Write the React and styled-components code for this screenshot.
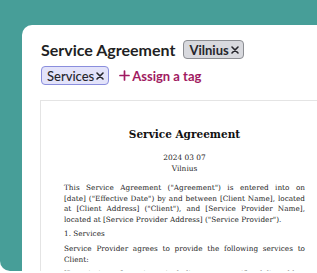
import React from 'react'
import styled, { createGlobalStyle } from 'styled-components'

const GlobalStyle = createGlobalStyle`
    html, body {
        overflow: hidden;
    }
    body {
        margin: 0;
        background: #ffffff;
        font-family: "Lato", "Noto Sans", sans-serif;
    }
`

const Backdrop = styled.div`
    width: 317px;
    height: 271px;
    background: #479e98;
    border-bottom-left-radius: 10px;
    overflow-x: clip;
    overflow-y: visible;
    padding: 25px 0 0 22px;
    box-sizing: border-box;
`
const Card = styled.div`
    width: 320px;
    height: 260px;
    background: #ffffff;
    border-top-left-radius: 10px;
    padding: 15px 0 0 19px;
    box-sizing: border-box;
`
const Header = styled.div`
    display: flex;
    flex-wrap: wrap;
    align-items: center;
    width: 272px;
    column-gap: 8px;
    row-gap: 7px;
`
const Title = styled.h1`
    margin: 0;
    font-size: 16px;
    font-weight: 700;
    color: #1f1f24;
    line-height: 19px;
`
const Tag = styled.span`
    display: inline-flex;
    align-items: center;
    gap: 1px;
    height: 19px;
    padding: 0 3px 0 5px;
    box-sizing: border-box;
    border-radius: 4px;
    border: 1px solid ${p => p.$border};
    background: ${p => p.$bg};
    color: #26262c;
    font-size: 13px;
    font-weight: ${p => p.$bold ? 700 : 500};
`
const AssignButton = styled.span`
    display: inline-flex;
    align-items: center;
    gap: 2px;
    margin-left: 2px;
    color: #a11a61;
    font-size: 13px;
    font-weight: 700;
`
const Paper = styled.div`
    margin-top: 15px;
    margin-left: -1px;
    width: 300px;
    border: 1px solid #e4e4e4;
    border-right: none;
    background: #ffffff;
    padding: 24px 0 0 23px;
    font-family: "DejaVu Serif", "Liberation Serif", serif;
    color: #262626;
`
const DocTitle = styled.h2`
    margin: 0;
    width: 241px;
    text-align: center;
    font-size: 10.5px;
    line-height: 18px;
    font-weight: 700;
    color: #111111;
`
const DocMeta = styled.div`
    width: 241px;
    margin-top: 9px;
    text-align: center;
    font-size: 7.4px;
    line-height: 11px;
`
const DocText = styled.p`
    width: 241px;
    margin: ${p => p.$top || 4}px 0 0;
    font-size: 7.3px;
    line-height: 10.6px;
`
// one printed line of the document, stretched to the column like the source
const DocLine = styled.span`
    display: block;
    white-space: nowrap;
    text-align: justify;
    text-align-last: ${p => p.$last ? 'left' : 'justify'};
`

const paragraphs = [
    { top: 9, lines: [
        'This Service Agreement ("Agreement") is entered into on',
        '[date] ("Effective Date") by and between [Client Name], located',
        'at [Client Address] ("Client"), and [Service Provider Name],',
        'located at [Service Provider Address] ("Service Provider").',
    ] },
    { lines: ['1. Services'] },
    { lines: [
        'Service Provider agrees to provide the following services to',
        'Client:',
    ] },
    { lines: [
        '[Description of services, including any specific deliverables,',
        'timelines, and milestones]',
    ] },
]

const Cross = () => (
    <svg width="10" height="10" viewBox="0 0 10 10" fill="none" stroke="currentColor" strokeWidth="1.6" strokeLinecap="round">
        <path d="M2 2 L8 8 M8 2 L2 8" />
    </svg>
)

const PlusIcon = () => (
    <svg width="11" height="11" viewBox="0 0 11 11" fill="none" stroke="currentColor" strokeWidth="1.7" strokeLinecap="round">
        <path d="M5.5 1 V10 M1 5.5 H10" />
    </svg>
)

export default function App() {
    return (
        <>
            <GlobalStyle />
            <Backdrop>
                <Card>
                    <Header>
                        <Title>Service Agreement</Title>
                        <Tag $bg="#d8d9de" $border="#8c8e93" $bold>Vilnius<Cross /></Tag>
                        <Tag $bg="#e3e3fa" $border="#8a8edd">Services<Cross /></Tag>
                        <AssignButton><PlusIcon />Assign a tag</AssignButton>
                    </Header>
                    <Paper>
                        <DocTitle>Service Agreement</DocTitle>
                        <DocMeta>2024 03 07<br />Vilnius</DocMeta>
                        {paragraphs.map((para, i) => (
                            <DocText key={i} $top={para.top}>
                                {para.lines.map((line, j) => (
                                    <DocLine key={j} $last={j === para.lines.length - 1}>{line}</DocLine>
                                ))}
                            </DocText>
                        ))}
                    </Paper>
                </Card>
            </Backdrop>
        </>
    )
}
